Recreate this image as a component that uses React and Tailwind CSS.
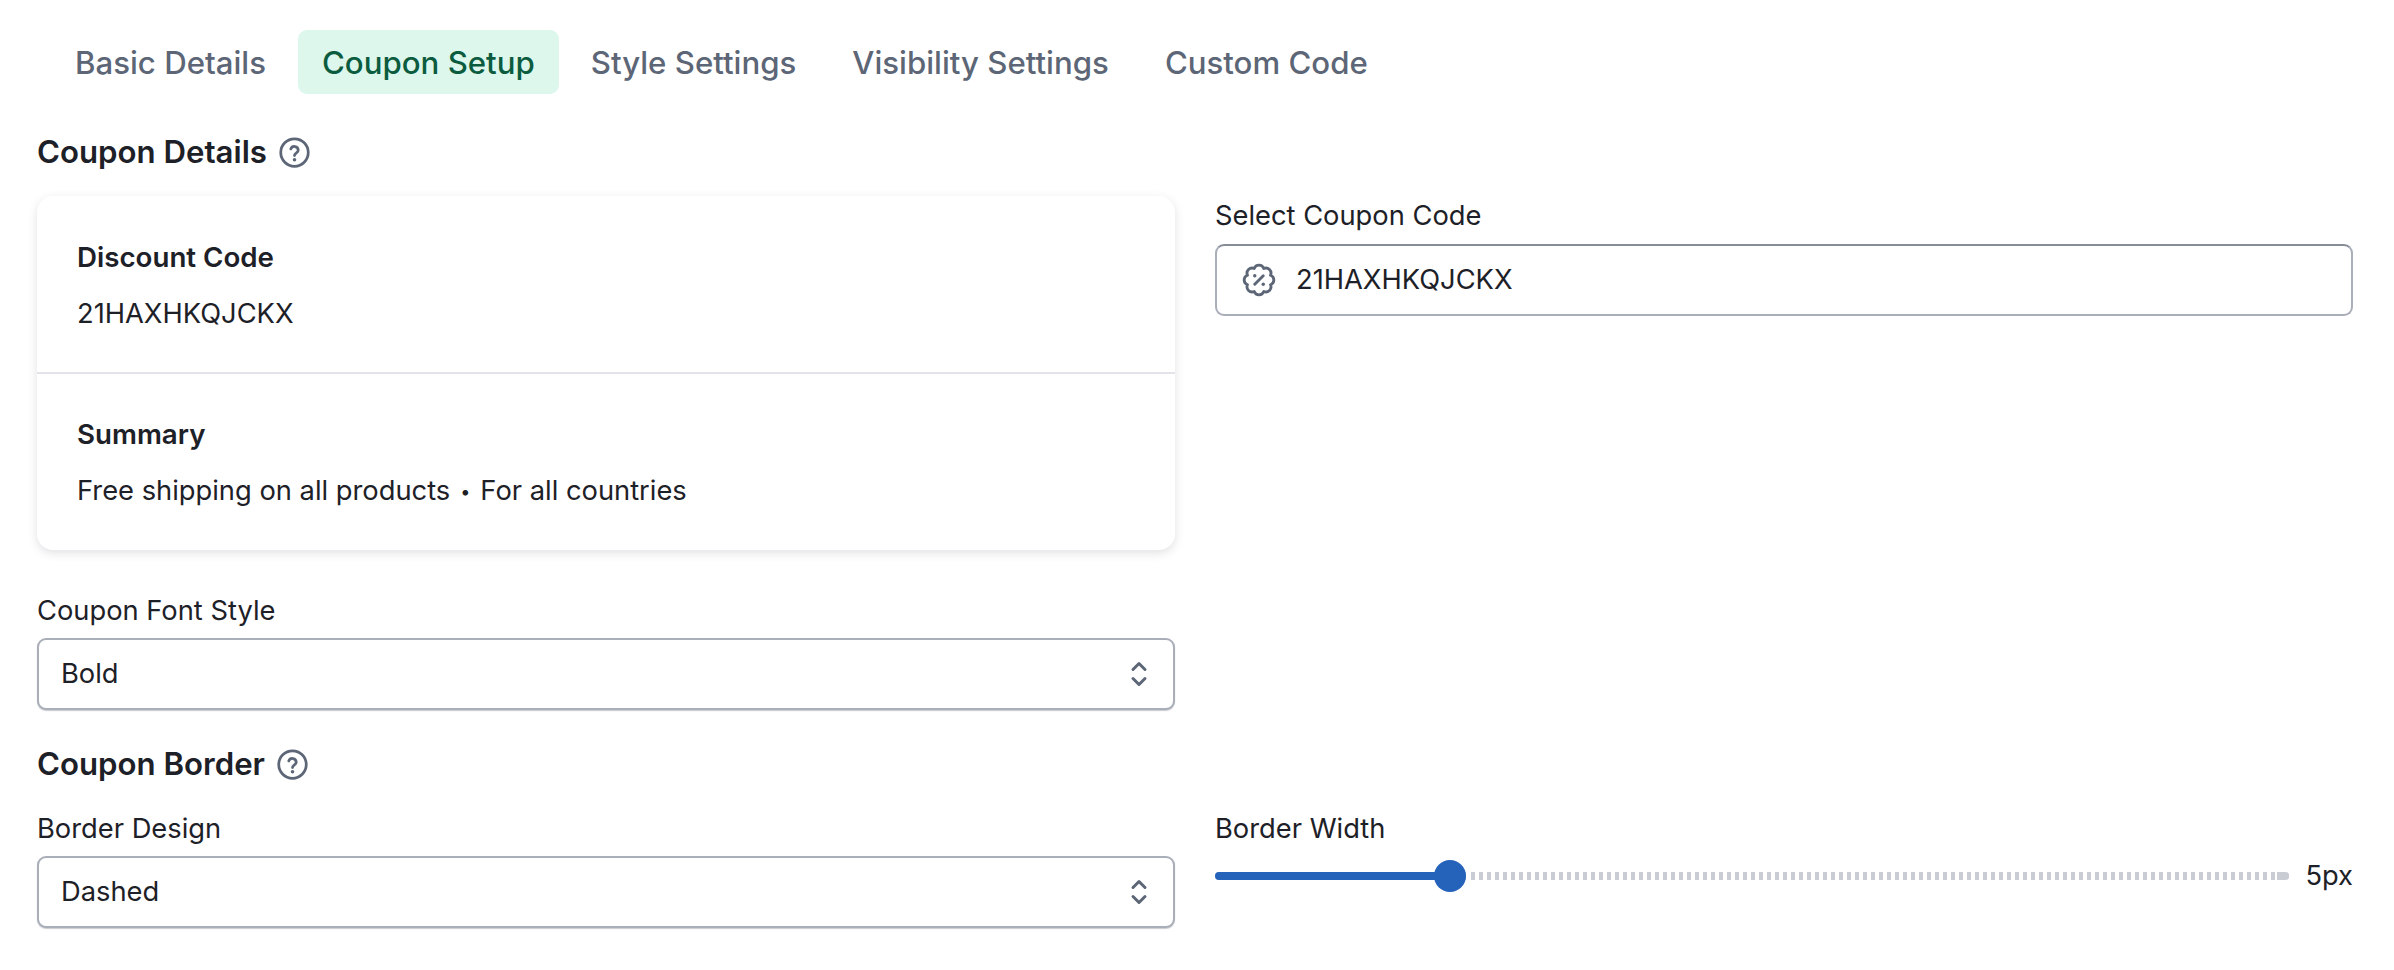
import React from "react";

const Help = () => (
  <svg className="ml-[11px] h-[33px] w-[33px] text-[#5c6676]" viewBox="0 0 24 24" fill="none" stroke="currentColor" strokeWidth="2" strokeLinecap="round" strokeLinejoin="round">
    <circle cx="12" cy="12" r="10" />
    <path d="M9.3 9.4a2.8 2.8 0 0 1 5.4.9c0 1.8-2.7 2.3-2.7 3.9" />
    <path d="M12 17.3h.01" strokeWidth="2.6" />
  </svg>
);

const Badge = () => (
  <svg className="h-[34px] w-[34px] text-[#5c6676]" viewBox="0 0 24 24" fill="none" stroke="currentColor" strokeWidth="2" strokeLinecap="round" strokeLinejoin="round">
    <path d="M8.63 3.87A3.6 3.6 0 0 1 15.37 3.87A3.6 3.6 0 0 1 20.13 8.63A3.6 3.6 0 0 1 20.13 15.37A3.6 3.6 0 0 1 15.37 20.13A3.6 3.6 0 0 1 8.63 20.13A3.6 3.6 0 0 1 3.87 15.37A3.6 3.6 0 0 1 3.87 8.63A3.6 3.6 0 0 1 8.63 3.87Z" />
    <path d="m15 9-6 6" />
    <path d="M9 9h.01" strokeWidth="2.4" />
    <path d="M15 15h.01" strokeWidth="2.4" />
  </svg>
);

const Chevrons = () => (
  <svg className="h-[32px] w-[24px] text-[#5c6676]" viewBox="0 0 24 32" fill="none" stroke="currentColor" strokeWidth="3" strokeLinecap="round" strokeLinejoin="round">
    <path d="M6 11.5 12 5.5l6 6" />
    <path d="M6 20.5l6 6 6-6" />
  </svg>
);

const Select = ({ value }) => (
  <div className="flex h-[72px] w-full items-center justify-between rounded-[9px] border-2 border-[#a9aeb9] bg-white pl-[22px] pr-[22px] shadow-[0_1px_1px_rgba(100,106,120,0.35)]">
    <span className="text-[#1d2127]">{value}</span>
    <Chevrons />
  </div>
);

const tabs = ["Basic Details", "Coupon Setup", "Style Settings", "Visibility Settings", "Custom Code"];

export default function App() {
  return (
    <div className="min-h-[970px] bg-white pl-[37px] pr-[41px] pt-[30px] text-[27.3px] leading-[36px] text-[#1d2127] [font-family:Inter,'Liberation_Sans',sans-serif]">
      <div className="flex h-[64px] gap-[8px] pl-[14px]">
        {tabs.map((t) =>
          t === "Coupon Setup" ? (
            <div key={t} className="flex h-[64px] items-center rounded-[9px] bg-[#def7ec] px-[24px] pt-[1px] text-[31.2px] font-medium text-[#0b5c3f]">
              {t}
            </div>
          ) : (
            <div key={t} className="flex h-[64px] items-center px-[24px] pt-[1px] text-[31.2px] font-medium text-[#5c6676]">
              {t}
            </div>
          )
        )}
      </div>

      <div className="mt-[40px] flex h-[36px] items-center">
        <h2 className="text-[31.2px] font-semibold text-[#1d2127]">Coupon Details</h2>
        <Help />
      </div>

      <div className="mt-[26px] grid grid-cols-2 gap-[40px]">
        <div className="h-[354px] rounded-[16px] bg-white shadow-[0_3px_10px_rgba(60,66,80,0.16)]">
          <div className="h-[178px] border-b-2 border-[#e2e4ea] px-[40px] pt-[43px]">
            <div className="text-[27.7px] font-semibold">Discount Code</div>
            <div className="mt-[21px]">21HAXHKQJCKX</div>
          </div>
          <div className="px-[40px] pt-[42px]">
            <div className="text-[27.7px] font-semibold">Summary</div>
            <div className="mt-[21px]">
              Free shipping on all products<span className="mx-[10px] align-[2px] text-[18px]">•</span>For all countries
            </div>
          </div>
        </div>
        <div>
          <label className="block pt-[2px]">Select Coupon Code</label>
          <div className="mt-[10px] flex h-[72px] items-center rounded-[9px] border-2 border-[#a9aeb9] border-t-[#868d99] pl-[25px]">
            <Badge />
            <span className="ml-[20px]">21HAXHKQJCKX</span>
          </div>
        </div>
      </div>

      <div className="mt-[43px] w-[1138px]">
        <label className="block">Coupon Font Style</label>
        <div className="mt-[9px]">
          <Select value="Bold" />
        </div>
      </div>

      <div className="mt-[36px] flex h-[36px] items-center">
        <h2 className="text-[31.2px] font-semibold text-[#1d2127]">Coupon Border</h2>
        <Help />
      </div>

      <div className="mt-[29px] grid grid-cols-2 gap-[40px]">
        <div>
          <label className="block">Border Design</label>
          <div className="mt-[9px]">
            <Select value="Dashed" />
          </div>
        </div>
        <div>
          <label className="block">Border Width</label>
          <div className="mt-[13px] flex h-[32px] items-center">
            <div className="relative h-[8px] w-[1075px] rounded-full bg-[repeating-linear-gradient(90deg,#c9ccd3_0,#c9ccd3_4px,transparent_4px,transparent_8px)]">
              <div className="absolute right-0 top-0 h-[8px] w-[12px] rounded-r-full bg-[#c9ccd3]" />
              <div className="absolute left-0 top-0 h-[8px] w-[234px] rounded-full bg-[#2563bb]" />
              <div className="absolute left-[219px] top-[-12px] h-[32px] w-[32px] rounded-full bg-[#2563bb]" />
              <div className="absolute left-[251px] top-0 h-[8px] w-[4px] bg-white" />
            </div>
            <span className="ml-[16px]">5px</span>
          </div>
        </div>
      </div>
    </div>
  );
}
